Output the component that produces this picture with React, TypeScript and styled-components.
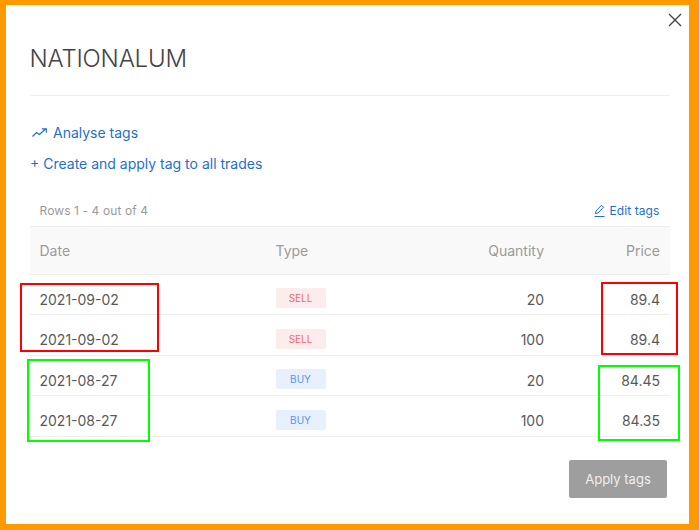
import styled, { createGlobalStyle } from 'styled-components'

interface Trade {
	date: string
	type: 'SELL' | 'BUY'
	quantity: number
	price: string
}

const trades: Trade[] = [
	{ date: '2021-09-02', type: 'SELL', quantity: 20, price: '89.4' },
	{ date: '2021-09-02', type: 'SELL', quantity: 100, price: '89.4' },
	{ date: '2021-08-27', type: 'BUY', quantity: 20, price: '84.45' },
	{ date: '2021-08-27', type: 'BUY', quantity: 100, price: '84.35' }
]

const App = (): JSX.Element => {
	return (
		<>
			<GlobalStyle />
			<Modal>
				<CloseButton aria-label="Close">
					<svg width="14" height="14" viewBox="0 0 14 14" fill="none" stroke="#444" strokeWidth="1.4">
						<path d="M1 1l12 12M13 1L1 13" />
					</svg>
				</CloseButton>
				<Title>NATIONALUM</Title>
				<Actions>
					<ActionLink>
						<TrendIcon width="15" height="9" viewBox="0 0 15 9" fill="none" stroke="#1f6fd0" strokeWidth="1.2">
							<path d="M0.5 8.5L4.5 4.5l3 2 6-5.5M9.8 0.8h4.5v4" />
						</TrendIcon>
						Analyse tags
					</ActionLink>
					<ActionLink>+ Create and apply tag to all trades</ActionLink>
				</Actions>
				<TableMeta>
					<RowCount>Rows 1 - 4 out of 4</RowCount>
					<EditLink>
						<svg width="11" height="13" viewBox="0 0 11 13" fill="none" stroke="#1f6fd0" strokeWidth="1">
							<path d="M1.5 9.5l.5-2.5L7.5 1.2l2 2L4 9z M0.5 12.5h10" />
						</svg>
						Edit tags
					</EditLink>
				</TableMeta>
				<Table>
					<colgroup>
						<col width="236" />
						<col width="158" />
						<col width="130" />
						<col width="116" />
					</colgroup>
					<thead>
						<tr>
							<HeadCell>Date</HeadCell>
							<HeadCell>Type</HeadCell>
							<HeadCell $right>Quantity</HeadCell>
							<HeadCell $right>Price</HeadCell>
						</tr>
					</thead>
					<tbody>
						{trades.map((trade, index) => (
							<tr key={index}>
								<Cell>{trade.date}</Cell>
								<Cell>
									<Badge $kind={trade.type}>{trade.type}</Badge>
								</Cell>
								<Cell $right>{trade.quantity}</Cell>
								<Cell $right>{trade.price}</Cell>
							</tr>
						))}
					</tbody>
				</Table>
				<Footer>
					<ApplyButton>Apply tags</ApplyButton>
				</Footer>
				<Marker $color="#ff0000" $left={14} $top={278} $width={139} $height={69} />
				<Marker $color="#ff0000" $left={595} $top={277} $width={77} $height={73} />
				<Marker $color="#00ff00" $left={21} $top={354} $width={123} $height={83} />
				<Marker $color="#00ff00" $left={592} $top={360} $width={82} $height={76} />
			</Modal>
		</>
	)
}

export default App

const GlobalStyle = createGlobalStyle`
	html, body {
		margin: 0;
		background: #ff9900;
	}
	body {
		padding: 5px 10px 6px 6px;
		font-family: 'Inter', 'Liberation Sans', sans-serif;
	}
`

const Modal = styled.div`
	position: relative;
	box-sizing: border-box;
	width: 683px;
	height: 519px;
	padding: 28px 19px 0 24px;
	background: #fff;
	color: #444;
`

const CloseButton = styled.button`
	position: absolute;
	top: 8px;
	right: 7px;
	padding: 0;
	display: flex;
	border: none;
	background: transparent;
`

const Title = styled.h2`
	margin: 0;
	height: 62px;
	border-bottom: 1px solid #eeeeee;
	font-size: 24px;
	line-height: 52px;
	font-weight: 300;
	letter-spacing: -0.2px;
	color: #444;
	text-indent: -0.5px;
`

const Actions = styled.div`
	display: flex;
	flex-direction: column;
	align-items: flex-start;
	gap: 14px;
	padding-top: 28px;
`

const ActionLink = styled.a`
	display: flex;
	align-items: center;
	gap: 6px;
	height: 17px;
	font-size: 14px;
	line-height: 17px;
	color: #1f6fd0;
`

const TrendIcon = styled.svg`
	margin-left: 2px;
`

const TableMeta = styled.div`
	display: flex;
	justify-content: space-between;
	align-items: center;
	height: 30px;
	margin: 23px 0 1px;
	padding: 0 10.5px 0 9.5px;
	font-size: 12px;
	letter-spacing: 0.1px;
`

const RowCount = styled.span`
	color: #9b9b9b;
`

const EditLink = styled.a`
	display: flex;
	align-items: center;
	gap: 4px;
	color: #1f6fd0;
`

const Table = styled.table`
	width: 640px;
	table-layout: fixed;
	border-collapse: collapse;
`

const HeadCell = styled.th<{ $right?: boolean }>`
	box-sizing: border-box;
	height: 47.5px;
	padding: 1px 10px 0 9.5px;
	background: #f9f9f9;
	border-top: 1px solid #eeeeee;
	border-bottom: 1px solid #eeeeee;
	font-size: 14px;
	font-weight: 400;
	color: #9b9b9b;
	text-align: ${({ $right }) => ($right ? 'right' : 'left')};
`

const Cell = styled.td<{ $right?: boolean }>`
	box-sizing: border-box;
	height: 40.5px;
	padding: 10px 10px 0 9.5px;
	border-bottom: 1px solid #eeeeee;
	font-size: 14px;
	color: #595959;
	text-align: ${({ $right }) => ($right ? 'right' : 'left')};
`

const Badge = styled.span<{ $kind: Trade['type'] }>`
	display: block;
	width: 50px;
	height: 20px;
	margin-top: -2px;
	border-radius: 2px;
	background: ${({ $kind }) => ($kind === 'SELL' ? '#fdecec' : '#e8f0fe')};
	color: ${({ $kind }) => ($kind === 'SELL' ? '#f26a6a' : '#5b93ee')};
	font-size: 10px;
	line-height: 20px;
	text-align: center;
`

const Footer = styled.div`
	display: flex;
	justify-content: flex-end;
	padding: 23px 3px 0 0;
`

const ApplyButton = styled.button`
	width: 98px;
	height: 38px;
	padding: 0;
	border: none;
	border-radius: 2px;
	background: #9e9e9e;
	color: #eee;
	font-family: inherit;
	font-size: 13px;
`

const Marker = styled.div<{ $color: string; $left: number; $top: number; $width: number; $height: number }>`
	position: absolute;
	box-sizing: border-box;
	left: ${({ $left }) => $left}px;
	top: ${({ $top }) => $top}px;
	width: ${({ $width }) => $width}px;
	height: ${({ $height }) => $height}px;
	border: 2px solid ${({ $color }) => $color};
`
